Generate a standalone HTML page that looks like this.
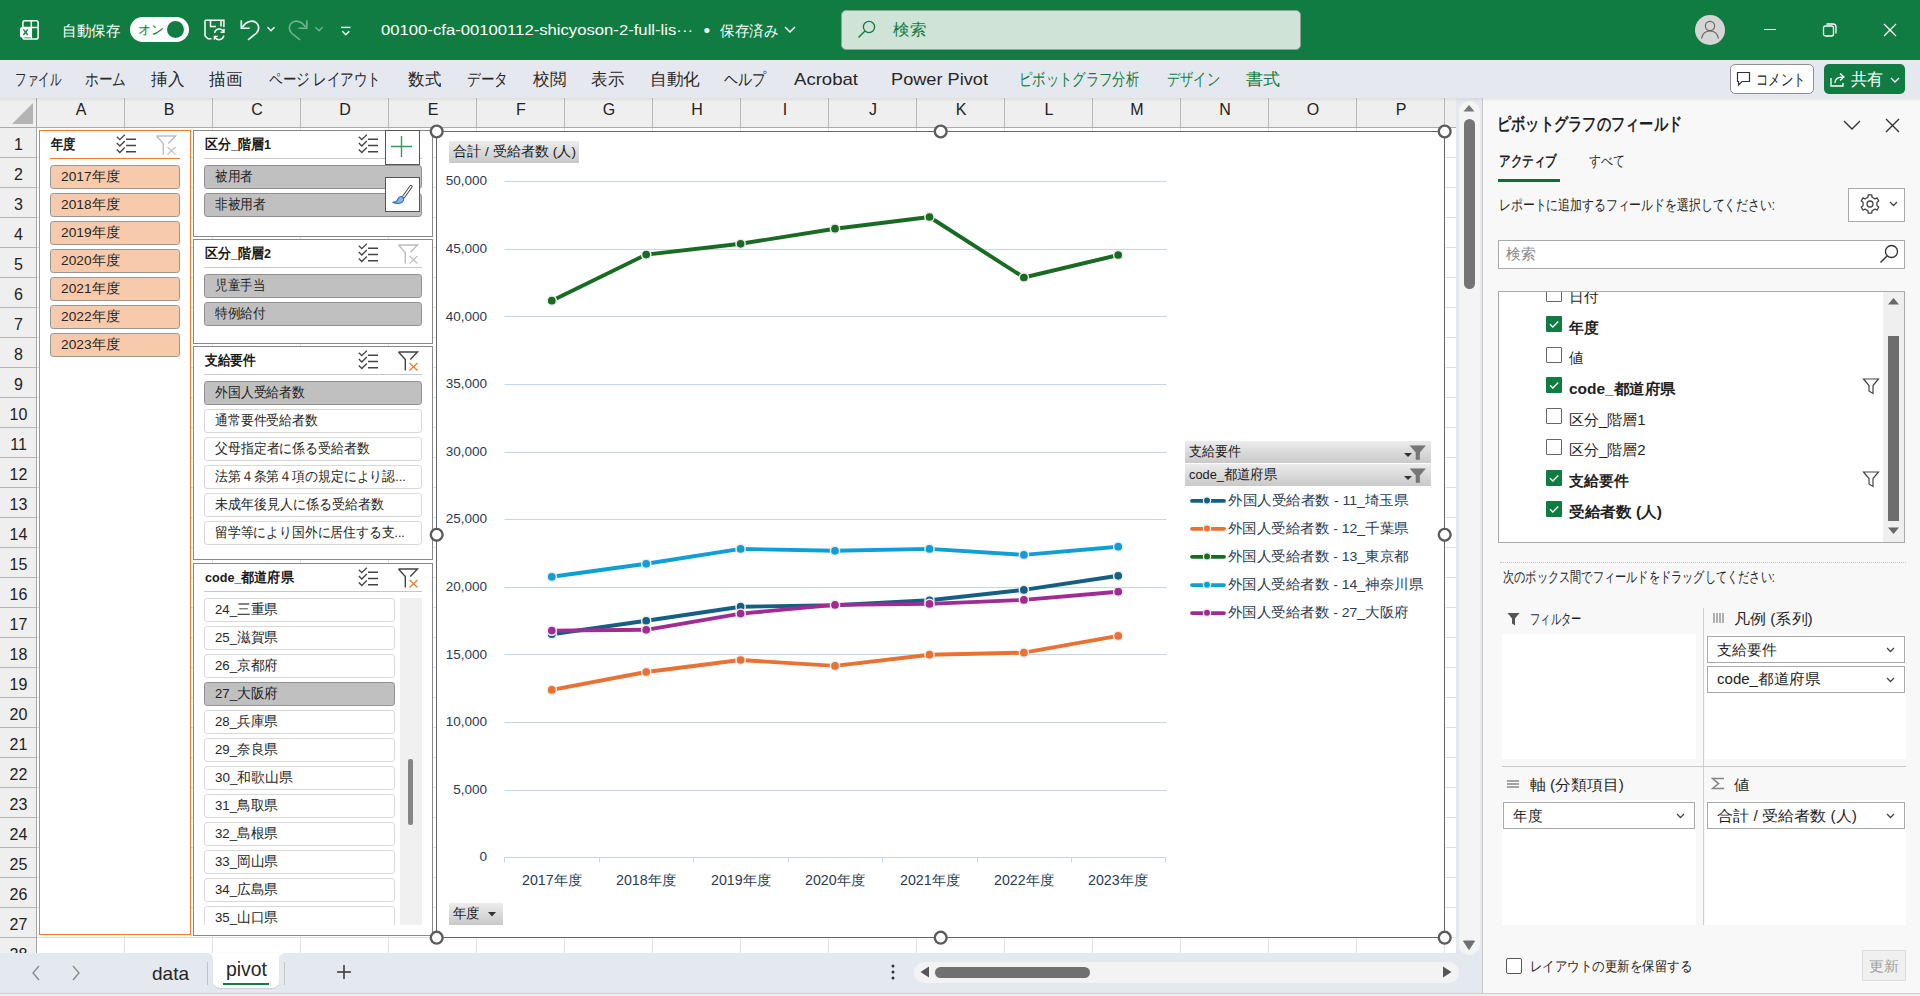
<!DOCTYPE html><html><head><meta charset="utf-8"><style>
*{box-sizing:border-box;margin:0;padding:0}
html,body{width:1920px;height:996px;overflow:hidden;background:#fff;font-family:"Liberation Sans",sans-serif;color:#222}
.a{position:absolute}
.t{position:absolute;white-space:nowrap;line-height:1}
svg{position:absolute;overflow:visible}
</style></head><body>
<div class="a" style="left:0px;top:0px;width:1920px;height:60px;background:#107c41"></div>
<svg style="left:19px;top:19px;" width="22" height="23" viewBox="0 0 22 23"><rect x="3.9" y="1.7" width="15.2" height="18.3" rx="1.8" fill="none" stroke="#fff" stroke-width="1.5"/><line x1="12.3" y1="1.7" x2="12.3" y2="20" stroke="#fff" stroke-width="1.5"/><line x1="3.9" y1="8.5" x2="19.1" y2="8.5" stroke="#fff" stroke-width="1.5"/><rect x="1" y="7.9" width="11.5" height="10.6" rx="2" fill="#fff"/><path d="M4.4 10.4l4.4 5.6M8.8 10.4l-4.4 5.6" stroke="#107c41" stroke-width="1.4"/></svg>
<div class="t" id="k0" style="left:62px;top:22.5px;font-size:15px;height:15px;color:#fff;transform:scaleX(0.9667);transform-origin:0 50%;">自動保存</div>
<div class="a" style="left:130px;top:17px;width:59px;height:25px;background:#fff;border-radius:13px"></div>
<div class="t" style="left:138px;top:23.0px;font-size:13px;height:13px;color:#107c41;">オン</div>
<div class="a" style="left:167px;top:21px;width:17px;height:17px;border-radius:50%;background:#107c41"></div>
<svg style="left:204px;top:18px;" width="24" height="24" viewBox="0 0 24 24"><path d="M1 2.2H19.9V9M1 2.2V18L4 20.8H7.5M6.5 2.2V8.5H12M17 2.2V8.5" fill="none" stroke="#fff" stroke-width="1.5"/><path d="M10.6 15a4.8 4.8 0 0 1 8.9-1.6M19.8 17.6a4.8 4.8 0 0 1-8.9 1.6" fill="none" stroke="#fff" stroke-width="1.5"/><path d="M20 10.8v3.4h-3.4M10.4 21.8v-3.4h3.4" fill="none" stroke="#fff" stroke-width="1.4"/></svg>
<svg style="left:238px;top:16px;" width="24" height="28" viewBox="0 0 24 28"><path d="M3.3 4.2V12.3H11.7" fill="none" stroke="#fff" stroke-width="1.6"/><path d="M4.5 11C8 5.5 15 3 19 7.5C22 11 20.5 14.5 18.5 17L10 23.8" fill="none" stroke="#fff" stroke-width="1.6"/></svg>
<svg style="left:266px;top:26px;" width="10" height="7" viewBox="0 0 10 7"><path d="M1.5 1.3l3.5 3.5 3.5-3.5" fill="none" stroke="#fff" stroke-width="1.4"/></svg>
<svg style="left:287px;top:16px;" width="24" height="28" viewBox="0 0 24 28"><path d="M19.8 4.2V12.3H11.4" fill="none" stroke="#72b28f" stroke-width="1.6"/><path d="M18.5 11C15 5.5 8 3 4 7.5C1 11 2.5 14.5 4.5 17L13 23.8" fill="none" stroke="#72b28f" stroke-width="1.6"/></svg>
<svg style="left:314px;top:26px;" width="10" height="7" viewBox="0 0 10 7"><path d="M1.5 1.3l3.5 3.5 3.5-3.5" fill="none" stroke="#72b28f" stroke-width="1.4"/></svg>
<svg style="left:340px;top:24px;" width="12" height="14" viewBox="0 0 12 14"><path d="M1 3.4h9.5" stroke="#fff" stroke-width="1.4"/><path d="M2.3 7.2l3.5 3.6 3.5-3.6" fill="none" stroke="#fff" stroke-width="1.4"/></svg>
<div class="t" id="k1" style="left:381px;top:22.2px;font-size:15.5px;height:15.5px;color:#fff;transform:scaleX(1.0757);transform-origin:0 50%;">00100-cfa-00100112-shicyoson-2-full-lis···</div>
<div class="t" style="left:703.5px;top:20.5px;font-size:19px;height:19px;color:#fff;">•</div>
<div class="t" id="k2" style="left:719.5px;top:22.5px;font-size:15px;height:15px;color:#fff;transform:scaleX(0.9667);transform-origin:0 50%;">保存済み</div>
<svg style="left:784px;top:26px;" width="12" height="8" viewBox="0 0 12 8"><path d="M1 1l5 5 5-5" fill="none" stroke="#fff" stroke-width="1.5"/></svg>
<div class="a" style="left:841px;top:10px;width:460px;height:40px;background:#d0e3d7;border-radius:5px;border:1px solid #8aa596"></div>
<svg style="left:856px;top:19px;" width="20" height="20" viewBox="0 0 20 20"><circle cx="13" cy="8" r="5.6" fill="none" stroke="#107c41" stroke-width="1.3"/><path d="M9 12L2.5 18.5" stroke="#107c41" stroke-width="1.4"/></svg>
<div class="t" id="k3" style="left:893px;top:21.5px;font-size:16px;height:16px;color:#107c41;transform:scaleX(1.0312);transform-origin:0 50%;">検索</div>
<div class="a" style="left:1695px;top:15px;width:30px;height:30px;border-radius:50%;background:#d5d5d5"></div>
<svg style="left:1700px;top:19px;" width="20" height="20" viewBox="0 0 20 20"><circle cx="10" cy="7" r="4.6" fill="none" stroke="#666" stroke-width="1.2"/><path d="M1.5 19.5c1-5 4-7.5 8.5-7.5s7.5 2.5 8.5 7.5" fill="none" stroke="#666" stroke-width="1.2"/></svg>
<div class="a" style="left:1764px;top:29px;width:12px;height:1.2px;background:#fff"></div>
<svg style="left:1822px;top:22px;" width="16" height="16" viewBox="0 0 16 16"><rect x="1.5" y="4" width="10" height="10" rx="2" fill="none" stroke="#fff" stroke-width="1.3"/><path d="M4.5 2h6.5a3 3 0 0 1 3 3v6.5" fill="none" stroke="#fff" stroke-width="1.3"/></svg>
<svg style="left:1883px;top:23px;" width="14" height="14" viewBox="0 0 14 14"><path d="M1 1l12 12M13 1L1 13" stroke="#fff" stroke-width="1.3"/></svg>
<div class="a" style="left:0px;top:60px;width:1920px;height:38px;background:#e5e9ef"></div>
<div class="t" id="k4" style="left:15px;top:71.0px;font-size:17px;height:17px;color:#262626;transform:scaleX(0.6765);transform-origin:0 50%;">ファイル</div>
<div class="t" id="k5" style="left:85px;top:71.0px;font-size:17px;height:17px;color:#262626;transform:scaleX(0.8039);transform-origin:0 50%;">ホーム</div>
<div class="t" id="k6" style="left:151px;top:71.0px;font-size:17px;height:17px;color:#262626;transform:scaleX(0.9706);transform-origin:0 50%;">挿入</div>
<div class="t" id="k7" style="left:209px;top:71.0px;font-size:17px;height:17px;color:#262626;transform:scaleX(0.9706);transform-origin:0 50%;">描画</div>
<div class="t" id="k8" style="left:269px;top:71.0px;font-size:17px;height:17px;color:#262626;transform:scaleX(0.7958);transform-origin:0 50%;">ページ レイアウト</div>
<div class="t" id="k9" style="left:408px;top:71.0px;font-size:17px;height:17px;color:#262626;transform:scaleX(0.9706);transform-origin:0 50%;">数式</div>
<div class="t" id="k10" style="left:467px;top:71.0px;font-size:17px;height:17px;color:#262626;transform:scaleX(0.8039);transform-origin:0 50%;">データ</div>
<div class="t" id="k11" style="left:533px;top:71.0px;font-size:17px;height:17px;color:#262626;transform:scaleX(0.9706);transform-origin:0 50%;">校閲</div>
<div class="t" id="k12" style="left:591px;top:71.0px;font-size:17px;height:17px;color:#262626;transform:scaleX(0.9706);transform-origin:0 50%;">表示</div>
<div class="t" id="k13" style="left:650px;top:71.0px;font-size:17px;height:17px;color:#262626;transform:scaleX(0.9804);transform-origin:0 50%;">自動化</div>
<div class="t" id="k14" style="left:724px;top:71.0px;font-size:17px;height:17px;color:#262626;transform:scaleX(0.8235);transform-origin:0 50%;">ヘルプ</div>
<div class="t" id="k15" style="left:794px;top:71.0px;font-size:17px;height:17px;color:#262626;transform:scaleX(1.0923);transform-origin:0 50%;">Acrobat</div>
<div class="t" id="k16" style="left:891px;top:71.0px;font-size:17px;height:17px;color:#262626;transform:scaleX(1.0694);transform-origin:0 50%;">Power Pivot</div>
<div class="t" id="k17" style="left:1019px;top:71.0px;font-size:17px;height:17px;color:#107c41;transform:scaleX(0.7843);transform-origin:0 50%;">ピボットグラフ分析</div>
<div class="t" id="k18" style="left:1167px;top:71.0px;font-size:17px;height:17px;color:#107c41;transform:scaleX(0.7794);transform-origin:0 50%;">デザイン</div>
<div class="t" id="k19" style="left:1246px;top:71.0px;font-size:17px;height:17px;color:#107c41;transform:scaleX(1.0000);transform-origin:0 50%;">書式</div>
<div class="a" style="left:1730px;top:64px;width:84px;height:30px;background:#fff;border:1px solid #8f8f8f;border-radius:5px"></div>
<svg style="left:1736px;top:71px;" width="16" height="16" viewBox="0 0 16 16"><path d="M1.5 1.5h12v9H6l-3.5 3.5v-3.5h-1z" fill="none" stroke="#333" stroke-width="1.2"/></svg>
<div class="t" id="k20" style="left:1755.5px;top:71.5px;font-size:16px;height:16px;color:#262626;transform:scaleX(0.7734);transform-origin:0 50%;">コメント</div>
<div class="a" style="left:1824px;top:64px;width:81px;height:30px;background:#107c41;border-radius:5px"></div>
<svg style="left:1829px;top:71px;" width="18" height="17" viewBox="0 0 18 17"><path d="M2 7v8h12v-3" fill="none" stroke="#fff" stroke-width="1.3"/><path d="M6 12c0-4 3-6 8-6M11 2.5l4 3.5-4 3.5" fill="none" stroke="#fff" stroke-width="1.3"/></svg>
<div class="t" id="k21" style="left:1850.5px;top:71.0px;font-size:17px;height:17px;color:#fff;transform:scaleX(0.9412);transform-origin:0 50%;">共有</div>
<svg style="left:1890px;top:77px;" width="10" height="6" viewBox="0 0 10 6"><path d="M1 1l4 4 4-4" fill="none" stroke="#fff" stroke-width="1.4"/></svg>
<div class="a" style="left:37px;top:128px;width:1419px;height:825px;background-color:#fff;background-image:linear-gradient(to right,#e1e1e1 1px,transparent 1px),linear-gradient(to bottom,#e1e1e1 1px,transparent 1px);background-size:88px 30px;background-position:87px 29px"></div>
<div class="a" style="left:0px;top:98px;width:1456px;height:30px;background:#efefef;border-bottom:1px solid #ababab"></div>
<div class="t" style="left:41.0px;top:101.5px;width:80px;text-align:center;font-size:16px;height:16px;color:#222;">A</div>
<div class="a" style="left:124px;top:98px;width:1px;height:29px;background:#b9b9b9"></div>
<div class="t" style="left:129.0px;top:101.5px;width:80px;text-align:center;font-size:16px;height:16px;color:#222;">B</div>
<div class="a" style="left:212px;top:98px;width:1px;height:29px;background:#b9b9b9"></div>
<div class="t" style="left:217.0px;top:101.5px;width:80px;text-align:center;font-size:16px;height:16px;color:#222;">C</div>
<div class="a" style="left:300px;top:98px;width:1px;height:29px;background:#b9b9b9"></div>
<div class="t" style="left:305.0px;top:101.5px;width:80px;text-align:center;font-size:16px;height:16px;color:#222;">D</div>
<div class="a" style="left:388px;top:98px;width:1px;height:29px;background:#b9b9b9"></div>
<div class="t" style="left:393.0px;top:101.5px;width:80px;text-align:center;font-size:16px;height:16px;color:#222;">E</div>
<div class="a" style="left:476px;top:98px;width:1px;height:29px;background:#b9b9b9"></div>
<div class="t" style="left:481.0px;top:101.5px;width:80px;text-align:center;font-size:16px;height:16px;color:#222;">F</div>
<div class="a" style="left:564px;top:98px;width:1px;height:29px;background:#b9b9b9"></div>
<div class="t" style="left:569.0px;top:101.5px;width:80px;text-align:center;font-size:16px;height:16px;color:#222;">G</div>
<div class="a" style="left:652px;top:98px;width:1px;height:29px;background:#b9b9b9"></div>
<div class="t" style="left:657.0px;top:101.5px;width:80px;text-align:center;font-size:16px;height:16px;color:#222;">H</div>
<div class="a" style="left:740px;top:98px;width:1px;height:29px;background:#b9b9b9"></div>
<div class="t" style="left:745.0px;top:101.5px;width:80px;text-align:center;font-size:16px;height:16px;color:#222;">I</div>
<div class="a" style="left:828px;top:98px;width:1px;height:29px;background:#b9b9b9"></div>
<div class="t" style="left:833.0px;top:101.5px;width:80px;text-align:center;font-size:16px;height:16px;color:#222;">J</div>
<div class="a" style="left:916px;top:98px;width:1px;height:29px;background:#b9b9b9"></div>
<div class="t" style="left:921.0px;top:101.5px;width:80px;text-align:center;font-size:16px;height:16px;color:#222;">K</div>
<div class="a" style="left:1004px;top:98px;width:1px;height:29px;background:#b9b9b9"></div>
<div class="t" style="left:1009.0px;top:101.5px;width:80px;text-align:center;font-size:16px;height:16px;color:#222;">L</div>
<div class="a" style="left:1092px;top:98px;width:1px;height:29px;background:#b9b9b9"></div>
<div class="t" style="left:1097.0px;top:101.5px;width:80px;text-align:center;font-size:16px;height:16px;color:#222;">M</div>
<div class="a" style="left:1180px;top:98px;width:1px;height:29px;background:#b9b9b9"></div>
<div class="t" style="left:1185.0px;top:101.5px;width:80px;text-align:center;font-size:16px;height:16px;color:#222;">N</div>
<div class="a" style="left:1268px;top:98px;width:1px;height:29px;background:#b9b9b9"></div>
<div class="t" style="left:1273.0px;top:101.5px;width:80px;text-align:center;font-size:16px;height:16px;color:#222;">O</div>
<div class="a" style="left:1356px;top:98px;width:1px;height:29px;background:#b9b9b9"></div>
<div class="t" style="left:1361.0px;top:101.5px;width:80px;text-align:center;font-size:16px;height:16px;color:#222;">P</div>
<div class="a" style="left:1444px;top:98px;width:1px;height:29px;background:#b9b9b9"></div>
<div class="a" style="left:36px;top:98px;width:1px;height:30px;background:#ababab"></div>
<svg style="left:11px;top:102px;" width="23" height="23" viewBox="0 0 23 23"><path d="M22 1v21H1z" fill="#b4b4b4"/></svg>
<div class="a" style="left:0px;top:128px;width:37px;height:825px;background:#efefef;border-right:1px solid #a6a6a6"></div>
<div class="t" style="left:0.5px;top:136.5px;width:36px;text-align:center;font-size:16px;height:16px;color:#222;">1</div>
<div class="a" style="left:0px;top:157px;width:36px;height:1px;background:#b4b4b4"></div>
<div class="t" style="left:0.5px;top:166.5px;width:36px;text-align:center;font-size:16px;height:16px;color:#222;">2</div>
<div class="a" style="left:0px;top:187px;width:36px;height:1px;background:#b4b4b4"></div>
<div class="t" style="left:0.5px;top:196.5px;width:36px;text-align:center;font-size:16px;height:16px;color:#222;">3</div>
<div class="a" style="left:0px;top:217px;width:36px;height:1px;background:#b4b4b4"></div>
<div class="t" style="left:0.5px;top:226.5px;width:36px;text-align:center;font-size:16px;height:16px;color:#222;">4</div>
<div class="a" style="left:0px;top:247px;width:36px;height:1px;background:#b4b4b4"></div>
<div class="t" style="left:0.5px;top:256.5px;width:36px;text-align:center;font-size:16px;height:16px;color:#222;">5</div>
<div class="a" style="left:0px;top:277px;width:36px;height:1px;background:#b4b4b4"></div>
<div class="t" style="left:0.5px;top:286.5px;width:36px;text-align:center;font-size:16px;height:16px;color:#222;">6</div>
<div class="a" style="left:0px;top:307px;width:36px;height:1px;background:#b4b4b4"></div>
<div class="t" style="left:0.5px;top:316.5px;width:36px;text-align:center;font-size:16px;height:16px;color:#222;">7</div>
<div class="a" style="left:0px;top:337px;width:36px;height:1px;background:#b4b4b4"></div>
<div class="t" style="left:0.5px;top:346.5px;width:36px;text-align:center;font-size:16px;height:16px;color:#222;">8</div>
<div class="a" style="left:0px;top:367px;width:36px;height:1px;background:#b4b4b4"></div>
<div class="t" style="left:0.5px;top:376.5px;width:36px;text-align:center;font-size:16px;height:16px;color:#222;">9</div>
<div class="a" style="left:0px;top:397px;width:36px;height:1px;background:#b4b4b4"></div>
<div class="t" style="left:0.5px;top:406.5px;width:36px;text-align:center;font-size:16px;height:16px;color:#222;">10</div>
<div class="a" style="left:0px;top:427px;width:36px;height:1px;background:#b4b4b4"></div>
<div class="t" style="left:0.5px;top:436.5px;width:36px;text-align:center;font-size:16px;height:16px;color:#222;">11</div>
<div class="a" style="left:0px;top:457px;width:36px;height:1px;background:#b4b4b4"></div>
<div class="t" style="left:0.5px;top:466.5px;width:36px;text-align:center;font-size:16px;height:16px;color:#222;">12</div>
<div class="a" style="left:0px;top:487px;width:36px;height:1px;background:#b4b4b4"></div>
<div class="t" style="left:0.5px;top:496.5px;width:36px;text-align:center;font-size:16px;height:16px;color:#222;">13</div>
<div class="a" style="left:0px;top:517px;width:36px;height:1px;background:#b4b4b4"></div>
<div class="t" style="left:0.5px;top:526.5px;width:36px;text-align:center;font-size:16px;height:16px;color:#222;">14</div>
<div class="a" style="left:0px;top:547px;width:36px;height:1px;background:#b4b4b4"></div>
<div class="t" style="left:0.5px;top:556.5px;width:36px;text-align:center;font-size:16px;height:16px;color:#222;">15</div>
<div class="a" style="left:0px;top:577px;width:36px;height:1px;background:#b4b4b4"></div>
<div class="t" style="left:0.5px;top:586.5px;width:36px;text-align:center;font-size:16px;height:16px;color:#222;">16</div>
<div class="a" style="left:0px;top:607px;width:36px;height:1px;background:#b4b4b4"></div>
<div class="t" style="left:0.5px;top:616.5px;width:36px;text-align:center;font-size:16px;height:16px;color:#222;">17</div>
<div class="a" style="left:0px;top:637px;width:36px;height:1px;background:#b4b4b4"></div>
<div class="t" style="left:0.5px;top:646.5px;width:36px;text-align:center;font-size:16px;height:16px;color:#222;">18</div>
<div class="a" style="left:0px;top:667px;width:36px;height:1px;background:#b4b4b4"></div>
<div class="t" style="left:0.5px;top:676.5px;width:36px;text-align:center;font-size:16px;height:16px;color:#222;">19</div>
<div class="a" style="left:0px;top:697px;width:36px;height:1px;background:#b4b4b4"></div>
<div class="t" style="left:0.5px;top:706.5px;width:36px;text-align:center;font-size:16px;height:16px;color:#222;">20</div>
<div class="a" style="left:0px;top:727px;width:36px;height:1px;background:#b4b4b4"></div>
<div class="t" style="left:0.5px;top:736.5px;width:36px;text-align:center;font-size:16px;height:16px;color:#222;">21</div>
<div class="a" style="left:0px;top:757px;width:36px;height:1px;background:#b4b4b4"></div>
<div class="t" style="left:0.5px;top:766.5px;width:36px;text-align:center;font-size:16px;height:16px;color:#222;">22</div>
<div class="a" style="left:0px;top:787px;width:36px;height:1px;background:#b4b4b4"></div>
<div class="t" style="left:0.5px;top:796.5px;width:36px;text-align:center;font-size:16px;height:16px;color:#222;">23</div>
<div class="a" style="left:0px;top:817px;width:36px;height:1px;background:#b4b4b4"></div>
<div class="t" style="left:0.5px;top:826.5px;width:36px;text-align:center;font-size:16px;height:16px;color:#222;">24</div>
<div class="a" style="left:0px;top:847px;width:36px;height:1px;background:#b4b4b4"></div>
<div class="t" style="left:0.5px;top:856.5px;width:36px;text-align:center;font-size:16px;height:16px;color:#222;">25</div>
<div class="a" style="left:0px;top:877px;width:36px;height:1px;background:#b4b4b4"></div>
<div class="t" style="left:0.5px;top:886.5px;width:36px;text-align:center;font-size:16px;height:16px;color:#222;">26</div>
<div class="a" style="left:0px;top:907px;width:36px;height:1px;background:#b4b4b4"></div>
<div class="t" style="left:0.5px;top:916.5px;width:36px;text-align:center;font-size:16px;height:16px;color:#222;">27</div>
<div class="a" style="left:0px;top:937px;width:36px;height:1px;background:#b4b4b4"></div>
<div class="t" style="left:0.5px;top:946.5px;width:36px;text-align:center;font-size:16px;height:16px;color:#222;">28</div>
<div class="a" style="left:0px;top:967px;width:36px;height:1px;background:#b4b4b4"></div>
<div class="a" style="left:39px;top:130px;width:152px;height:805.3px;background:#fff;border:1.3px solid #ed7d31"></div>
<div class="t" id="k22" style="left:50.5px;top:137.8px;font-size:13.5px;height:13.5px;color:#1a1a1a;font-weight:bold;transform:scaleX(0.8750);transform-origin:0 50%;">年度</div>
<div class="a" style="left:50px;top:158px;width:130px;height:1.2px;background:#ed7d31"></div>
<svg style="left:116px;top:135px;" width="21" height="20" viewBox="0 0 21 20"><path d="M0.8 1.7l3 3 5-5M0.8 8l3 3 5-5M0.8 14.5l3 3 5-5" fill="none" stroke="#444" stroke-width="1.3"/><path d="M10 4.2h10M10 10.4h10M10 16.8h10" stroke="#444" stroke-width="1.5"/></svg>
<svg style="left:156px;top:134.5px;" width="21" height="21" viewBox="0 0 21 21"><path d="M0.5 1H19.5L12.3 8.6M0.5 1L7.3 8.6V19.5" fill="none" stroke="#bdbdbd" stroke-width="1.4"/><path d="M11.5 12l8 7.5M19.5 12l-8 7.5" stroke="#c4c4c4" stroke-width="1.3"/></svg>
<div class="a" style="left:39px;top:130px;width:152px;height:805.3px;overflow:hidden"><div class="a" style="left:11px;top:35.3px;width:130px;height:23.5px;border-radius:3.2px;background:#f8caac;border:1px solid #979797"></div><div class="t" id="k23" style="left:22px;top:40.3px;font-size:13.5px;color:#262626;transform:scaleX(1.0164);transform-origin:0 50%;">2017年度</div><div class="a" style="left:11px;top:63.3px;width:130px;height:23.5px;border-radius:3.2px;background:#f8caac;border:1px solid #979797"></div><div class="t" id="k24" style="left:22px;top:68.3px;font-size:13.5px;color:#262626;transform:scaleX(1.0164);transform-origin:0 50%;">2018年度</div><div class="a" style="left:11px;top:91.3px;width:130px;height:23.5px;border-radius:3.2px;background:#f8caac;border:1px solid #979797"></div><div class="t" id="k25" style="left:22px;top:96.3px;font-size:13.5px;color:#262626;transform:scaleX(1.0164);transform-origin:0 50%;">2019年度</div><div class="a" style="left:11px;top:119.3px;width:130px;height:23.5px;border-radius:3.2px;background:#f8caac;border:1px solid #979797"></div><div class="t" id="k26" style="left:22px;top:124.3px;font-size:13.5px;color:#262626;transform:scaleX(1.0164);transform-origin:0 50%;">2020年度</div><div class="a" style="left:11px;top:147.3px;width:130px;height:23.5px;border-radius:3.2px;background:#f8caac;border:1px solid #979797"></div><div class="t" id="k27" style="left:22px;top:152.3px;font-size:13.5px;color:#262626;transform:scaleX(1.0164);transform-origin:0 50%;">2021年度</div><div class="a" style="left:11px;top:175.3px;width:130px;height:23.5px;border-radius:3.2px;background:#f8caac;border:1px solid #979797"></div><div class="t" id="k28" style="left:22px;top:180.3px;font-size:13.5px;color:#262626;transform:scaleX(1.0164);transform-origin:0 50%;">2022年度</div><div class="a" style="left:11px;top:203.3px;width:130px;height:23.5px;border-radius:3.2px;background:#f8caac;border:1px solid #979797"></div><div class="t" id="k29" style="left:22px;top:208.3px;font-size:13.5px;color:#262626;transform:scaleX(1.0164);transform-origin:0 50%;">2023年度</div></div>
<div class="a" style="left:193px;top:130px;width:240px;height:107px;background:#fff;border:1px solid #888888"></div>
<div class="t" id="k30" style="left:204.5px;top:137.8px;font-size:13.5px;height:13.5px;color:#1a1a1a;font-weight:bold;transform:scaleX(0.9292);transform-origin:0 50%;">区分_階層1</div>
<div class="a" style="left:204px;top:158px;width:218px;height:1.2px;background:#c8c8c8"></div>
<svg style="left:358px;top:135px;" width="21" height="20" viewBox="0 0 21 20"><path d="M0.8 1.7l3 3 5-5M0.8 8l3 3 5-5M0.8 14.5l3 3 5-5" fill="none" stroke="#444" stroke-width="1.3"/><path d="M10 4.2h10M10 10.4h10M10 16.8h10" stroke="#444" stroke-width="1.5"/></svg>
<svg style="left:398px;top:134.5px;" width="21" height="21" viewBox="0 0 21 21"><path d="M0.5 1H19.5L12.3 8.6M0.5 1L7.3 8.6V19.5" fill="none" stroke="#bdbdbd" stroke-width="1.4"/><path d="M11.5 12l8 7.5M19.5 12l-8 7.5" stroke="#c4c4c4" stroke-width="1.3"/></svg>
<div class="a" style="left:193px;top:130px;width:240px;height:107px;overflow:hidden"><div class="a" style="left:11px;top:35.3px;width:218px;height:23.5px;border-radius:3.2px;background:#c0c0c0;border:1px solid #919191"></div><div class="t" id="k31" style="left:22px;top:40.3px;font-size:13.5px;color:#222;transform:scaleX(0.9048);transform-origin:0 50%;">被用者</div><div class="a" style="left:11px;top:63.3px;width:218px;height:23.5px;border-radius:3.2px;background:#c0c0c0;border:1px solid #919191"></div><div class="t" id="k32" style="left:22px;top:68.3px;font-size:13.5px;color:#222;transform:scaleX(0.9107);transform-origin:0 50%;">非被用者</div></div>
<div class="a" style="left:193px;top:239px;width:240px;height:105px;background:#fff;border:1px solid #888888"></div>
<div class="t" id="k33" style="left:204.5px;top:246.8px;font-size:13.5px;height:13.5px;color:#1a1a1a;font-weight:bold;transform:scaleX(0.9292);transform-origin:0 50%;">区分_階層2</div>
<div class="a" style="left:204px;top:267px;width:218px;height:1.2px;background:#c8c8c8"></div>
<svg style="left:358px;top:244px;" width="21" height="20" viewBox="0 0 21 20"><path d="M0.8 1.7l3 3 5-5M0.8 8l3 3 5-5M0.8 14.5l3 3 5-5" fill="none" stroke="#444" stroke-width="1.3"/><path d="M10 4.2h10M10 10.4h10M10 16.8h10" stroke="#444" stroke-width="1.5"/></svg>
<svg style="left:398px;top:243.5px;" width="21" height="21" viewBox="0 0 21 21"><path d="M0.5 1H19.5L12.3 8.6M0.5 1L7.3 8.6V19.5" fill="none" stroke="#bdbdbd" stroke-width="1.4"/><path d="M11.5 12l8 7.5M19.5 12l-8 7.5" stroke="#c4c4c4" stroke-width="1.3"/></svg>
<div class="a" style="left:193px;top:239px;width:240px;height:105px;overflow:hidden"><div class="a" style="left:11px;top:35.3px;width:218px;height:23.5px;border-radius:3.2px;background:#c0c0c0;border:1px solid #919191"></div><div class="t" id="k34" style="left:22px;top:40.3px;font-size:13.5px;color:#222;transform:scaleX(0.8929);transform-origin:0 50%;">児童手当</div><div class="a" style="left:11px;top:63.3px;width:218px;height:23.5px;border-radius:3.2px;background:#c0c0c0;border:1px solid #919191"></div><div class="t" id="k35" style="left:22px;top:68.3px;font-size:13.5px;color:#222;transform:scaleX(0.9018);transform-origin:0 50%;">特例給付</div></div>
<div class="a" style="left:193px;top:346px;width:240px;height:214px;background:#fff;border:1px solid #888888"></div>
<div class="t" id="k36" style="left:204.5px;top:353.8px;font-size:13.5px;height:13.5px;color:#1a1a1a;font-weight:bold;transform:scaleX(0.9107);transform-origin:0 50%;">支給要件</div>
<div class="a" style="left:204px;top:374px;width:218px;height:1.2px;background:#c8c8c8"></div>
<svg style="left:358px;top:351px;" width="21" height="20" viewBox="0 0 21 20"><path d="M0.8 1.7l3 3 5-5M0.8 8l3 3 5-5M0.8 14.5l3 3 5-5" fill="none" stroke="#444" stroke-width="1.3"/><path d="M10 4.2h10M10 10.4h10M10 16.8h10" stroke="#444" stroke-width="1.5"/></svg>
<svg style="left:398px;top:350.5px;" width="21" height="21" viewBox="0 0 21 21"><path d="M0.5 1H19.5L12.3 8.6M0.5 1L7.3 8.6V19.5" fill="none" stroke="#444" stroke-width="1.4"/><path d="M11.5 12l8 7.5M19.5 12l-8 7.5" stroke="#ed7d31" stroke-width="1.3"/></svg>
<div class="a" style="left:193px;top:346px;width:240px;height:214px;overflow:hidden"><div class="a" style="left:11px;top:35.3px;width:218px;height:23.5px;border-radius:3.2px;background:#c0c0c0;border:1px solid #919191"></div><div class="t" id="k37" style="left:22px;top:40.3px;font-size:13.5px;color:#222;transform:scaleX(0.9184);transform-origin:0 50%;">外国人受給者数</div><div class="a" style="left:11px;top:63.3px;width:218px;height:23.5px;border-radius:3.2px;background:#fff;border:1px solid #d8d8d8"></div><div class="t" id="k38" style="left:22px;top:68.3px;font-size:13.5px;color:#262626;transform:scaleX(0.9196);transform-origin:0 50%;">通常要件受給者数</div><div class="a" style="left:11px;top:91.3px;width:218px;height:23.5px;border-radius:3.2px;background:#fff;border:1px solid #d8d8d8"></div><div class="t" id="k39" style="left:22px;top:96.3px;font-size:13.5px;color:#262626;transform:scaleX(0.9202);transform-origin:0 50%;">父母指定者に係る受給者数</div><div class="a" style="left:11px;top:119.3px;width:218px;height:23.5px;border-radius:3.2px;background:#fff;border:1px solid #d8d8d8"></div><div class="t" id="k40" style="left:22px;top:124.3px;font-size:13.5px;color:#262626;transform:scaleX(0.9196);transform-origin:0 50%;">法第４条第４項の規定により認...</div><div class="a" style="left:11px;top:147.3px;width:218px;height:23.5px;border-radius:3.2px;background:#fff;border:1px solid #d8d8d8"></div><div class="t" id="k41" style="left:22px;top:152.3px;font-size:13.5px;color:#262626;transform:scaleX(0.9269);transform-origin:0 50%;">未成年後見人に係る受給者数</div><div class="a" style="left:11px;top:175.3px;width:218px;height:23.5px;border-radius:3.2px;background:#fff;border:1px solid #d8d8d8"></div><div class="t" id="k42" style="left:22px;top:180.3px;font-size:13.5px;color:#262626;transform:scaleX(0.9157);transform-origin:0 50%;">留学等により国外に居住する支...</div></div>
<div class="a" style="left:193px;top:563px;width:240px;height:373px;background:#fff;border:1px solid #888888"></div>
<div class="t" id="k43" style="left:204.5px;top:570.8px;font-size:13.5px;height:13.5px;color:#1a1a1a;font-weight:bold;transform:scaleX(0.9323);transform-origin:0 50%;">code_都道府県</div>
<div class="a" style="left:204px;top:591px;width:218px;height:1.2px;background:#c8c8c8"></div>
<svg style="left:358px;top:568px;" width="21" height="20" viewBox="0 0 21 20"><path d="M0.8 1.7l3 3 5-5M0.8 8l3 3 5-5M0.8 14.5l3 3 5-5" fill="none" stroke="#444" stroke-width="1.3"/><path d="M10 4.2h10M10 10.4h10M10 16.8h10" stroke="#444" stroke-width="1.5"/></svg>
<svg style="left:398px;top:567.5px;" width="21" height="21" viewBox="0 0 21 21"><path d="M0.5 1H19.5L12.3 8.6M0.5 1L7.3 8.6V19.5" fill="none" stroke="#444" stroke-width="1.4"/><path d="M11.5 12l8 7.5M19.5 12l-8 7.5" stroke="#ed7d31" stroke-width="1.3"/></svg>
<div class="a" style="left:193px;top:563px;width:240px;height:362px;overflow:hidden"><div class="a" style="left:11px;top:35.3px;width:190.5px;height:23.5px;border-radius:3.2px;background:#fff;border:1px solid #d8d8d8"></div><div class="t" id="k44" style="left:22px;top:40.3px;font-size:13.5px;color:#262626;transform:scaleX(0.9763);transform-origin:0 50%;">24_三重県</div><div class="a" style="left:11px;top:63.3px;width:190.5px;height:23.5px;border-radius:3.2px;background:#fff;border:1px solid #d8d8d8"></div><div class="t" id="k45" style="left:22px;top:68.3px;font-size:13.5px;color:#262626;transform:scaleX(0.9763);transform-origin:0 50%;">25_滋賀県</div><div class="a" style="left:11px;top:91.3px;width:190.5px;height:23.5px;border-radius:3.2px;background:#fff;border:1px solid #d8d8d8"></div><div class="t" id="k46" style="left:22px;top:96.3px;font-size:13.5px;color:#262626;transform:scaleX(0.9763);transform-origin:0 50%;">26_京都府</div><div class="a" style="left:11px;top:119.3px;width:190.5px;height:23.5px;border-radius:3.2px;background:#c0c0c0;border:1px solid #919191"></div><div class="t" id="k47" style="left:22px;top:124.3px;font-size:13.5px;color:#222;transform:scaleX(0.9763);transform-origin:0 50%;">27_大阪府</div><div class="a" style="left:11px;top:147.3px;width:190.5px;height:23.5px;border-radius:3.2px;background:#fff;border:1px solid #d8d8d8"></div><div class="t" id="k48" style="left:22px;top:152.3px;font-size:13.5px;color:#262626;transform:scaleX(0.9763);transform-origin:0 50%;">28_兵庫県</div><div class="a" style="left:11px;top:175.3px;width:190.5px;height:23.5px;border-radius:3.2px;background:#fff;border:1px solid #d8d8d8"></div><div class="t" id="k49" style="left:22px;top:180.3px;font-size:13.5px;color:#262626;transform:scaleX(0.9763);transform-origin:0 50%;">29_奈良県</div><div class="a" style="left:11px;top:203.3px;width:190.5px;height:23.5px;border-radius:3.2px;background:#fff;border:1px solid #d8d8d8"></div><div class="t" id="k50" style="left:22px;top:208.3px;font-size:13.5px;color:#262626;transform:scaleX(0.9932);transform-origin:0 50%;">30_和歌山県</div><div class="a" style="left:11px;top:231.3px;width:190.5px;height:23.5px;border-radius:3.2px;background:#fff;border:1px solid #d8d8d8"></div><div class="t" id="k51" style="left:22px;top:236.3px;font-size:13.5px;color:#262626;transform:scaleX(0.9763);transform-origin:0 50%;">31_鳥取県</div><div class="a" style="left:11px;top:259.3px;width:190.5px;height:23.5px;border-radius:3.2px;background:#fff;border:1px solid #d8d8d8"></div><div class="t" id="k52" style="left:22px;top:264.3px;font-size:13.5px;color:#262626;transform:scaleX(0.9763);transform-origin:0 50%;">32_島根県</div><div class="a" style="left:11px;top:287.3px;width:190.5px;height:23.5px;border-radius:3.2px;background:#fff;border:1px solid #d8d8d8"></div><div class="t" id="k53" style="left:22px;top:292.3px;font-size:13.5px;color:#262626;transform:scaleX(0.9763);transform-origin:0 50%;">33_岡山県</div><div class="a" style="left:11px;top:315.3px;width:190.5px;height:23.5px;border-radius:3.2px;background:#fff;border:1px solid #d8d8d8"></div><div class="t" id="k54" style="left:22px;top:320.3px;font-size:13.5px;color:#262626;transform:scaleX(0.9763);transform-origin:0 50%;">34_広島県</div><div class="a" style="left:11px;top:343.3px;width:190.5px;height:23.5px;border-radius:3.2px;background:#fff;border:1px solid #d8d8d8"></div><div class="t" id="k55" style="left:22px;top:348.3px;font-size:13.5px;color:#262626;transform:scaleX(0.9763);transform-origin:0 50%;">35_山口県</div></div>
<div class="a" style="left:400px;top:598px;width:22px;height:327px;background:#f0f0f0"></div>
<div class="a" style="left:408px;top:759px;width:4.5px;height:66px;background:#858585;border-radius:2px"></div>
<div class="a" style="left:385px;top:130px;width:35px;height:35px;background:#fff;border:1.3px solid #555"></div>
<svg style="left:385px;top:130px;" width="35" height="35" viewBox="0 0 35 35"><path d="M16.5 6v21M6 16.5h21" stroke="#2f9e5b" stroke-width="1.4"/></svg>
<div class="a" style="left:385px;top:177px;width:35px;height:35px;background:#fff;border:1.3px solid #555"></div>
<svg style="left:385.5px;top:177.5px;" width="33" height="33" viewBox="0 0 33 33"><path d="M25 8.5L17.5 19" stroke="#444" stroke-width="3.2" stroke-linecap="round"/><path d="M25 8.5L17.5 19" stroke="#fff" stroke-width="1.3" stroke-linecap="round"/><path d="M16 18.5c-2.5 0-4 1.5-4.5 3.5-.5 1.5-2 2.2-5 2.3 3 1.5 8 1.7 10-.5 1.2-1.3 1.4-3 .7-4.5z" fill="#8ab4e8" stroke="#2a6fc9" stroke-width="1.1"/></svg>
<div class="a" style="left:436px;top:131px;width:1009px;height:807px;background:#fff;border:1.5px solid #666"></div>
<svg style="left:0px;top:0px;pointer-events:none" width="1920" height="996" viewBox="0 0 1920 996"><path d="M504.5 857.5H1166.5" stroke="#c5d5ea" stroke-width="1"/><path d="M504.5 790.5H1166.5" stroke="#c5d5ea" stroke-width="1"/><path d="M504.5 722.5H1166.5" stroke="#c5d5ea" stroke-width="1"/><path d="M504.5 654.5H1166.5" stroke="#c5d5ea" stroke-width="1"/><path d="M504.5 587.5H1166.5" stroke="#c5d5ea" stroke-width="1"/><path d="M504.5 519.5H1166.5" stroke="#c5d5ea" stroke-width="1"/><path d="M504.5 452.5H1166.5" stroke="#c5d5ea" stroke-width="1"/><path d="M504.5 384.5H1166.5" stroke="#c5d5ea" stroke-width="1"/><path d="M504.5 316.5H1166.5" stroke="#c5d5ea" stroke-width="1"/><path d="M504.5 249.5H1166.5" stroke="#c5d5ea" stroke-width="1"/><path d="M504.5 181.5H1166.5" stroke="#c5d5ea" stroke-width="1"/><path d="M504.5 857.5V862.5" stroke="#c5d5ea" stroke-width="1"/><path d="M599.5 857.5V862.5" stroke="#c5d5ea" stroke-width="1"/><path d="M693.5 857.5V862.5" stroke="#c5d5ea" stroke-width="1"/><path d="M788.5 857.5V862.5" stroke="#c5d5ea" stroke-width="1"/><path d="M882.5 857.5V862.5" stroke="#c5d5ea" stroke-width="1"/><path d="M977.5 857.5V862.5" stroke="#c5d5ea" stroke-width="1"/><path d="M1071.5 857.5V862.5" stroke="#c5d5ea" stroke-width="1"/><path d="M1165.5 857.5V862.5" stroke="#c5d5ea" stroke-width="1"/><path d="M551.8 634.2 L646.2 620.8 L740.6 606.7 L835.0 605.2 L929.5 600.3 L1023.9 589.9 L1118.2 575.8" fill="none" stroke="#156082" stroke-width="3.9" stroke-linejoin="round"/><circle cx="551.8" cy="634.2" r="4.6" fill="#156082" stroke="#ebebeb" stroke-width="1.5"/><circle cx="646.2" cy="620.8" r="4.6" fill="#156082" stroke="#ebebeb" stroke-width="1.5"/><circle cx="740.6" cy="606.7" r="4.6" fill="#156082" stroke="#ebebeb" stroke-width="1.5"/><circle cx="835.0" cy="605.2" r="4.6" fill="#156082" stroke="#ebebeb" stroke-width="1.5"/><circle cx="929.5" cy="600.3" r="4.6" fill="#156082" stroke="#ebebeb" stroke-width="1.5"/><circle cx="1023.9" cy="589.9" r="4.6" fill="#156082" stroke="#ebebeb" stroke-width="1.5"/><circle cx="1118.2" cy="575.8" r="4.6" fill="#156082" stroke="#ebebeb" stroke-width="1.5"/><path d="M551.8 689.9 L646.2 672.0 L740.6 660.0 L835.0 665.9 L929.5 654.7 L1023.9 652.7 L1118.2 635.9" fill="none" stroke="#e97132" stroke-width="3.9" stroke-linejoin="round"/><circle cx="551.8" cy="689.9" r="4.6" fill="#e97132" stroke="#ebebeb" stroke-width="1.5"/><circle cx="646.2" cy="672.0" r="4.6" fill="#e97132" stroke="#ebebeb" stroke-width="1.5"/><circle cx="740.6" cy="660.0" r="4.6" fill="#e97132" stroke="#ebebeb" stroke-width="1.5"/><circle cx="835.0" cy="665.9" r="4.6" fill="#e97132" stroke="#ebebeb" stroke-width="1.5"/><circle cx="929.5" cy="654.7" r="4.6" fill="#e97132" stroke="#ebebeb" stroke-width="1.5"/><circle cx="1023.9" cy="652.7" r="4.6" fill="#e97132" stroke="#ebebeb" stroke-width="1.5"/><circle cx="1118.2" cy="635.9" r="4.6" fill="#e97132" stroke="#ebebeb" stroke-width="1.5"/><path d="M551.8 300.7 L646.2 254.6 L740.6 243.8 L835.0 228.7 L929.5 217.0 L1023.9 277.5 L1118.2 255.0" fill="none" stroke="#196b24" stroke-width="3.9" stroke-linejoin="round"/><circle cx="551.8" cy="300.7" r="4.6" fill="#196b24" stroke="#ebebeb" stroke-width="1.5"/><circle cx="646.2" cy="254.6" r="4.6" fill="#196b24" stroke="#ebebeb" stroke-width="1.5"/><circle cx="740.6" cy="243.8" r="4.6" fill="#196b24" stroke="#ebebeb" stroke-width="1.5"/><circle cx="835.0" cy="228.7" r="4.6" fill="#196b24" stroke="#ebebeb" stroke-width="1.5"/><circle cx="929.5" cy="217.0" r="4.6" fill="#196b24" stroke="#ebebeb" stroke-width="1.5"/><circle cx="1023.9" cy="277.5" r="4.6" fill="#196b24" stroke="#ebebeb" stroke-width="1.5"/><circle cx="1118.2" cy="255.0" r="4.6" fill="#196b24" stroke="#ebebeb" stroke-width="1.5"/><path d="M551.8 576.8 L646.2 563.8 L740.6 548.9 L835.0 550.8 L929.5 548.9 L1023.9 554.9 L1118.2 546.7" fill="none" stroke="#0f9ed5" stroke-width="3.9" stroke-linejoin="round"/><circle cx="551.8" cy="576.8" r="4.6" fill="#0f9ed5" stroke="#ebebeb" stroke-width="1.5"/><circle cx="646.2" cy="563.8" r="4.6" fill="#0f9ed5" stroke="#ebebeb" stroke-width="1.5"/><circle cx="740.6" cy="548.9" r="4.6" fill="#0f9ed5" stroke="#ebebeb" stroke-width="1.5"/><circle cx="835.0" cy="550.8" r="4.6" fill="#0f9ed5" stroke="#ebebeb" stroke-width="1.5"/><circle cx="929.5" cy="548.9" r="4.6" fill="#0f9ed5" stroke="#ebebeb" stroke-width="1.5"/><circle cx="1023.9" cy="554.9" r="4.6" fill="#0f9ed5" stroke="#ebebeb" stroke-width="1.5"/><circle cx="1118.2" cy="546.7" r="4.6" fill="#0f9ed5" stroke="#ebebeb" stroke-width="1.5"/><path d="M551.8 630.6 L646.2 629.8 L740.6 613.6 L835.0 604.9 L929.5 603.9 L1023.9 599.9 L1118.2 591.7" fill="none" stroke="#a02b93" stroke-width="3.9" stroke-linejoin="round"/><circle cx="551.8" cy="630.6" r="4.6" fill="#a02b93" stroke="#ebebeb" stroke-width="1.5"/><circle cx="646.2" cy="629.8" r="4.6" fill="#a02b93" stroke="#ebebeb" stroke-width="1.5"/><circle cx="740.6" cy="613.6" r="4.6" fill="#a02b93" stroke="#ebebeb" stroke-width="1.5"/><circle cx="835.0" cy="604.9" r="4.6" fill="#a02b93" stroke="#ebebeb" stroke-width="1.5"/><circle cx="929.5" cy="603.9" r="4.6" fill="#a02b93" stroke="#ebebeb" stroke-width="1.5"/><circle cx="1023.9" cy="599.9" r="4.6" fill="#a02b93" stroke="#ebebeb" stroke-width="1.5"/><circle cx="1118.2" cy="591.7" r="4.6" fill="#a02b93" stroke="#ebebeb" stroke-width="1.5"/></svg>
<div class="t" style="left:287px;top:850.4px;width:200px;text-align:right;font-size:13.5px;height:13.5px;color:#2a3b52;">0</div>
<div class="t" style="left:287px;top:782.8px;width:200px;text-align:right;font-size:13.5px;height:13.5px;color:#2a3b52;">5,000</div>
<div class="t" style="left:287px;top:715.2px;width:200px;text-align:right;font-size:13.5px;height:13.5px;color:#2a3b52;">10,000</div>
<div class="t" style="left:287px;top:647.5px;width:200px;text-align:right;font-size:13.5px;height:13.5px;color:#2a3b52;">15,000</div>
<div class="t" style="left:287px;top:580.0px;width:200px;text-align:right;font-size:13.5px;height:13.5px;color:#2a3b52;">20,000</div>
<div class="t" style="left:287px;top:512.4px;width:200px;text-align:right;font-size:13.5px;height:13.5px;color:#2a3b52;">25,000</div>
<div class="t" style="left:287px;top:444.8px;width:200px;text-align:right;font-size:13.5px;height:13.5px;color:#2a3b52;">30,000</div>
<div class="t" style="left:287px;top:377.2px;width:200px;text-align:right;font-size:13.5px;height:13.5px;color:#2a3b52;">35,000</div>
<div class="t" style="left:287px;top:309.6px;width:200px;text-align:right;font-size:13.5px;height:13.5px;color:#2a3b52;">40,000</div>
<div class="t" style="left:287px;top:242.0px;width:200px;text-align:right;font-size:13.5px;height:13.5px;color:#2a3b52;">45,000</div>
<div class="t" style="left:287px;top:174.4px;width:200px;text-align:right;font-size:13.5px;height:13.5px;color:#2a3b52;">50,000</div>
<div class="t" id="k56" style="left:521.8px;top:872.5px;font-size:14px;height:14px;color:#2a3b52;transform:scaleX(1.0143);transform-origin:0 50%;">2017年度</div>
<div class="t" id="k57" style="left:616.2px;top:872.5px;font-size:14px;height:14px;color:#2a3b52;transform:scaleX(1.0143);transform-origin:0 50%;">2018年度</div>
<div class="t" id="k58" style="left:710.6px;top:872.5px;font-size:14px;height:14px;color:#2a3b52;transform:scaleX(1.0143);transform-origin:0 50%;">2019年度</div>
<div class="t" id="k59" style="left:805.0px;top:872.5px;font-size:14px;height:14px;color:#2a3b52;transform:scaleX(1.0143);transform-origin:0 50%;">2020年度</div>
<div class="t" id="k60" style="left:899.5px;top:872.5px;font-size:14px;height:14px;color:#2a3b52;transform:scaleX(1.0143);transform-origin:0 50%;">2021年度</div>
<div class="t" id="k61" style="left:993.9px;top:872.5px;font-size:14px;height:14px;color:#2a3b52;transform:scaleX(1.0143);transform-origin:0 50%;">2022年度</div>
<div class="t" id="k62" style="left:1088.2px;top:872.5px;font-size:14px;height:14px;color:#2a3b52;transform:scaleX(1.0143);transform-origin:0 50%;">2023年度</div>
<div class="a" style="left:449px;top:141px;width:130px;height:22px;background:linear-gradient(#ececec,#c9c9c9);"></div>
<div class="t" id="k63" style="left:453px;top:145.2px;font-size:13.5px;height:13.5px;color:#1a1a1a;transform:scaleX(1.0082);transform-origin:0 50%;">合計 / 受給者数 (人)</div>
<div class="a" style="left:1185px;top:441px;width:246px;height:21.7px;background:linear-gradient(#ececec,#c9c9c9);"></div>
<div class="t" id="k64" style="left:1189px;top:445.1px;font-size:13.5px;height:13.5px;color:#1a1a1a;transform:scaleX(0.9286);transform-origin:0 50%;">支給要件</div>
<svg style="left:1403px;top:444px;" width="26" height="17" viewBox="0 0 26 17"><path d="M1 9h8l-4 4z" fill="#333"/><path d="M7.3 1.8H22.3L16.6 8.6V15.5H13V8.6Z" fill="#767676" stroke="#767676" stroke-width="0.6" stroke-linejoin="round"/></svg>
<div class="a" style="left:1185px;top:464.2px;width:246px;height:21.5px;background:linear-gradient(#ececec,#c9c9c9);"></div>
<div class="t" id="k65" style="left:1189px;top:468.2px;font-size:13.5px;height:13.5px;color:#1a1a1a;transform:scaleX(0.9483);transform-origin:0 50%;">code_都道府県</div>
<svg style="left:1403px;top:467.2px;" width="26" height="17" viewBox="0 0 26 17"><path d="M1 9h8l-4 4z" fill="#333"/><path d="M7.3 1.8H22.3L16.6 8.6V15.5H13V8.6Z" fill="#767676" stroke="#767676" stroke-width="0.6" stroke-linejoin="round"/></svg>
<div class="a" style="left:449px;top:903px;width:54px;height:22px;background:linear-gradient(#ececec,#c9c9c9);"></div>
<div class="t" id="k66" style="left:453px;top:907.2px;font-size:13.5px;height:13.5px;color:#1a1a1a;transform:scaleX(0.9536);transform-origin:0 50%;">年度</div>
<svg style="left:487px;top:911.0px;" width="10" height="6" viewBox="0 0 10 6"><path d="M1 1h8l-4 4.5z" fill="#333"/></svg>
<div class="t" id="k67" style="left:1228px;top:493.6px;font-size:13.5px;height:13.5px;color:#2a3b52;transform:scaleX(1.0407);transform-origin:0 50%;">外国人受給者数 - 11_埼玉県</div>
<div class="t" id="k68" style="left:1228px;top:521.5px;font-size:13.5px;height:13.5px;color:#2a3b52;transform:scaleX(1.0348);transform-origin:0 50%;">外国人受給者数 - 12_千葉県</div>
<div class="t" id="k69" style="left:1228px;top:549.5px;font-size:13.5px;height:13.5px;color:#2a3b52;transform:scaleX(1.0348);transform-origin:0 50%;">外国人受給者数 - 13_東京都</div>
<div class="t" id="k70" style="left:1228px;top:577.8px;font-size:13.5px;height:13.5px;color:#2a3b52;transform:scaleX(1.0343);transform-origin:0 50%;">外国人受給者数 - 14_神奈川県</div>
<div class="t" id="k71" style="left:1228px;top:605.8px;font-size:13.5px;height:13.5px;color:#2a3b52;transform:scaleX(1.0348);transform-origin:0 50%;">外国人受給者数 - 27_大阪府</div>
<svg style="left:0px;top:0px;pointer-events:none" width="1920" height="996" viewBox="0 0 1920 996"><path d="M1192 500.9H1224" stroke="#156082" stroke-width="3.8" stroke-linecap="round"/><circle cx="1207" cy="500.5" r="3.6" fill="#156082" stroke="#ececec" stroke-width="1.3"/><path d="M1192 528.8H1224" stroke="#e97132" stroke-width="3.8" stroke-linecap="round"/><circle cx="1207" cy="528.4" r="3.6" fill="#e97132" stroke="#ececec" stroke-width="1.3"/><path d="M1192 556.8H1224" stroke="#196b24" stroke-width="3.8" stroke-linecap="round"/><circle cx="1207" cy="556.4" r="3.6" fill="#196b24" stroke="#ececec" stroke-width="1.3"/><path d="M1192 585.1H1224" stroke="#0f9ed5" stroke-width="3.8" stroke-linecap="round"/><circle cx="1207" cy="584.7" r="3.6" fill="#0f9ed5" stroke="#ececec" stroke-width="1.3"/><path d="M1192 613.1H1224" stroke="#a02b93" stroke-width="3.8" stroke-linecap="round"/><circle cx="1207" cy="612.7" r="3.6" fill="#a02b93" stroke="#ececec" stroke-width="1.3"/></svg>
<svg style="left:0px;top:0px;pointer-events:none" width="1920" height="996" viewBox="0 0 1920 996"><circle cx="436.7" cy="131.5" r="5.9" fill="#fff" stroke="#5c5c5c" stroke-width="2.4"/><circle cx="940.7" cy="131.5" r="5.9" fill="#fff" stroke="#5c5c5c" stroke-width="2.4"/><circle cx="1444.7" cy="131.5" r="5.9" fill="#fff" stroke="#5c5c5c" stroke-width="2.4"/><circle cx="436.7" cy="534.8" r="5.9" fill="#fff" stroke="#5c5c5c" stroke-width="2.4"/><circle cx="1444.7" cy="534.8" r="5.9" fill="#fff" stroke="#5c5c5c" stroke-width="2.4"/><circle cx="436.7" cy="937.7" r="5.9" fill="#fff" stroke="#5c5c5c" stroke-width="2.4"/><circle cx="940.7" cy="937.7" r="5.9" fill="#fff" stroke="#5c5c5c" stroke-width="2.4"/><circle cx="1444.7" cy="937.7" r="5.9" fill="#fff" stroke="#5c5c5c" stroke-width="2.4"/></svg>
<div class="a" style="left:0px;top:953px;width:1482px;height:40px;background:#fff"></div>
<div class="a" style="left:0px;top:953px;width:213px;height:40px;background:#e4e8ef;border-top-right-radius:6px"></div>
<div class="a" style="left:279px;top:953px;width:1203px;height:40px;background:#e4e8ef;border-top-left-radius:6px"></div>
<div class="a" style="left:213px;top:985px;width:66px;height:8px;background:#e4e8ef"></div>
<svg style="left:30px;top:964px;" width="12" height="18" viewBox="0 0 12 18"><path d="M9 2L3 9l6 7" fill="none" stroke="#8c8c8c" stroke-width="1.4"/></svg>
<svg style="left:70px;top:964px;" width="12" height="18" viewBox="0 0 12 18"><path d="M3 2l6 7-6 7" fill="none" stroke="#8c8c8c" stroke-width="1.4"/></svg>
<div class="t" id="k72" style="left:152px;top:963.5px;font-size:19px;height:19px;color:#262626;transform:scaleX(1.0004);transform-origin:0 50%;">data</div>
<div class="a" style="left:207px;top:962px;width:1px;height:23px;background:#c4c4c4"></div>
<div class="a" style="left:213px;top:953px;width:66px;height:35px;background:#fff;border-radius:0 0 7px 7px;box-shadow:0 0.5px 1px rgba(0,0,0,0.12)"></div>
<div class="t" id="k73" style="left:226px;top:960.2px;font-size:19.5px;height:19.5px;color:#262626;transform:scaleX(0.9951);transform-origin:0 50%;">pivot</div>
<div class="a" style="left:223px;top:983px;width:46px;height:2px;background:#107c41"></div>
<div class="a" style="left:284px;top:962px;width:1px;height:23px;background:#c4c4c4"></div>
<svg style="left:336px;top:964px;" width="16" height="16" viewBox="0 0 16 16"><path d="M8 1v14M1 8h14" stroke="#333" stroke-width="1.5"/></svg>
<svg style="left:890px;top:963px;" width="6" height="20" viewBox="0 0 6 20"><circle cx="3" cy="3" r="1.5" fill="#333"/><circle cx="3" cy="9" r="1.5" fill="#333"/><circle cx="3" cy="15" r="1.5" fill="#333"/></svg>
<div class="a" style="left:914px;top:962px;width:545px;height:21px;background:#f3f3f3;border-radius:10px"></div>
<svg style="left:917px;top:965px;" width="14" height="14" viewBox="0 0 14 14"><path d="M12 1.5v11L3.5 7z" fill="#555"/></svg>
<div class="a" style="left:935px;top:966.5px;width:155px;height:11.5px;background:#707070;border-radius:6px"></div>
<svg style="left:1441px;top:965px;" width="14" height="14" viewBox="0 0 14 14"><path d="M2 1.5v11L10.5 7z" fill="#555"/></svg>
<div class="a" style="left:0px;top:993px;width:1920px;height:3px;background:#eeeeee;border-top:1px solid #cfcfcf"></div>
<div class="a" style="left:1456px;top:98px;width:26px;height:855px;background:#e5e9ef"></div>
<div class="a" style="left:1459px;top:101px;width:21px;height:854px;background:#f4f4f4;border-radius:10px"></div>
<svg style="left:1463px;top:103px;" width="12" height="10" viewBox="0 0 12 10"><path d="M0.5 8.5L6 2l5.5 6.5z" fill="#777"/></svg>
<div class="a" style="left:1464px;top:119px;width:11px;height:170px;background:#747474;border-radius:6px"></div>
<svg style="left:1463px;top:940px;" width="12" height="11" viewBox="0 0 12 11"><path d="M0.5 1L6 9.5l5.5-8.5z" fill="#707070" stroke="#707070" stroke-width="1" stroke-linejoin="round"/></svg>
<div class="a" style="left:1482px;top:98px;width:438px;height:895px;background:#f8f8f8;border-left:1px solid #c9c9c9"></div>
<div class="t" id="k74" style="left:1497px;top:116.2px;font-size:17.5px;height:17.5px;color:#1f1f1f;font-weight:bold;transform:scaleX(0.7906);transform-origin:0 50%;">ピボットグラフのフィールド</div>
<svg style="left:1842.5px;top:120px;" width="18" height="11" viewBox="0 0 18 11"><path d="M1 1l8 8 8-8" fill="none" stroke="#333" stroke-width="1.4"/></svg>
<svg style="left:1884.5px;top:118px;" width="15" height="15" viewBox="0 0 15 15"><path d="M1 1l13 13M14 1L1 14" stroke="#333" stroke-width="1.4"/></svg>
<div class="t" id="k75" style="left:1499px;top:153.8px;font-size:14.5px;height:14.5px;color:#1f1f1f;font-weight:bold;transform:scaleX(0.7733);transform-origin:0 50%;">アクティブ</div>
<div class="t" id="k76" style="left:1589px;top:153.8px;font-size:14.5px;height:14.5px;color:#333;transform:scaleX(0.7933);transform-origin:0 50%;">すべて</div>
<div class="a" style="left:1498px;top:179px;width:62px;height:3px;background:#0f6b3a"></div>
<div class="t" id="k77" style="left:1499px;top:197.8px;font-size:14.5px;height:14.5px;color:#262626;transform:scaleX(0.7908);transform-origin:0 50%;">レポートに追加するフィールドを選択してください:</div>
<div class="a" style="left:1848px;top:187.5px;width:57px;height:34px;background:#fff;border:1px solid #a9a9a9"></div>
<svg style="left:1860px;top:194px;" width="20" height="20" viewBox="0 0 20 20"><g transform="translate(10 10)" fill="none" stroke="#444" stroke-width="1.3" stroke-linejoin="round"><circle r="3"/><path d="M-3.45 -5.98 L-1.98 -6.92 L-1.77 -9.13 L1.77 -9.13 L1.98 -6.92 L3.45 -5.98 L3.45 -5.98 L5.00 -5.18 L7.02 -6.10 L8.79 -3.03 L6.99 -1.74 L6.90 0.00 L6.90 0.00 L6.99 1.74 L8.79 3.03 L7.02 6.10 L5.00 5.18 L3.45 5.98 L3.45 5.98 L1.98 6.92 L1.77 9.13 L-1.77 9.13 L-1.98 6.92 L-3.45 5.98 L-3.45 5.98 L-5.00 5.18 L-7.02 6.10 L-8.79 3.03 L-6.99 1.74 L-6.90 0.00 L-6.90 -0.00 L-6.99 -1.74 L-8.79 -3.03 L-7.02 -6.10 L-5.00 -5.18 L-3.45 -5.98Z"/></g></svg>
<svg style="left:1889px;top:201px;" width="9" height="6" viewBox="0 0 9 6"><path d="M1 1l3.5 3.5L8 1" fill="none" stroke="#444" stroke-width="1.3"/></svg>
<div class="a" style="left:1498px;top:239.5px;width:407px;height:29px;background:#fff;border:1px solid #a9a9a9"></div>
<div class="t" id="k78" style="left:1506px;top:246.8px;font-size:14.5px;height:14.5px;color:#8a8a8a;transform:scaleX(0.9833);transform-origin:0 50%;">検索</div>
<svg style="left:1878px;top:243px;" width="22" height="22" viewBox="0 0 22 22"><circle cx="13.5" cy="8.5" r="6" fill="none" stroke="#333" stroke-width="1.3"/><path d="M9.3 12.7L2.5 19.5" stroke="#333" stroke-width="1.4"/></svg>
<div class="a" style="left:1498px;top:291px;width:407px;height:252px;background:#fff;border:1px solid #a9a9a9;overflow:hidden"></div>
<div class="a" style="left:1499px;top:292px;width:384px;height:250px;overflow:hidden"><div class="a" style="left:47px;top:-6.5px;width:16px;height:16px;background:#fff;border:1px solid #666;border-radius:1px"></div><div class="t" id="k79" style="left:70px;top:-3.0px;font-size:15px;color:#1f1f1f;transform:scaleX(0.9833);transform-origin:0 50%;">日付</div><div class="a" style="left:47px;top:24px;width:16px;height:16px;background:#107c41;border-radius:1px"></div><svg style="left:47px;top:24px" width="16" height="16"><path d="M4 8.2l2.8 2.8 5.5-5.5" fill="none" stroke="#fff" stroke-width="1.3"/></svg><div class="t" id="k80" style="left:70px;top:27.5px;font-size:15px;color:#1f1f1f;font-weight:bold;transform:scaleX(0.9833);transform-origin:0 50%;">年度</div><div class="a" style="left:47px;top:54.69999999999999px;width:16px;height:16px;background:#fff;border:1px solid #666;border-radius:1px"></div><div class="t" id="k81" style="left:70px;top:58.19999999999999px;font-size:15px;color:#1f1f1f;transform:scaleX(0.9667);transform-origin:0 50%;">値</div><div class="a" style="left:47px;top:85.39999999999998px;width:16px;height:16px;background:#107c41;border-radius:1px"></div><svg style="left:47px;top:85.39999999999998px" width="16" height="16"><path d="M4 8.2l2.8 2.8 5.5-5.5" fill="none" stroke="#fff" stroke-width="1.3"/></svg><div class="t" id="k82" style="left:70px;top:88.89999999999998px;font-size:15px;color:#1f1f1f;font-weight:bold;transform:scaleX(1.0314);transform-origin:0 50%;">code_都道府県</div><svg style="left:363px;top:85.39999999999998px" width="18" height="18"><path d="M1.5 2h15l-5.5 6.5v8l-4-2.5v-5.5z" fill="none" stroke="#444" stroke-width="1.2"/></svg><div class="a" style="left:47px;top:116.10000000000002px;width:16px;height:16px;background:#fff;border:1px solid #666;border-radius:1px"></div><div class="t" id="k83" style="left:70px;top:119.60000000000002px;font-size:15px;color:#1f1f1f;transform:scaleX(1.0002);transform-origin:0 50%;">区分_階層1</div><div class="a" style="left:47px;top:146.8px;width:16px;height:16px;background:#fff;border:1px solid #666;border-radius:1px"></div><div class="t" id="k84" style="left:70px;top:150.3px;font-size:15px;color:#1f1f1f;transform:scaleX(1.0002);transform-origin:0 50%;">区分_階層2</div><div class="a" style="left:47px;top:177.5px;width:16px;height:16px;background:#107c41;border-radius:1px"></div><svg style="left:47px;top:177.5px" width="16" height="16"><path d="M4 8.2l2.8 2.8 5.5-5.5" fill="none" stroke="#fff" stroke-width="1.3"/></svg><div class="t" id="k85" style="left:70px;top:181.0px;font-size:15px;color:#1f1f1f;font-weight:bold;transform:scaleX(0.9900);transform-origin:0 50%;">支給要件</div><svg style="left:363px;top:177.5px" width="18" height="18"><path d="M1.5 2h15l-5.5 6.5v8l-4-2.5v-5.5z" fill="none" stroke="#444" stroke-width="1.2"/></svg><div class="a" style="left:47px;top:208.60000000000002px;width:16px;height:16px;background:#107c41;border-radius:1px"></div><svg style="left:47px;top:208.60000000000002px" width="16" height="16"><path d="M4 8.2l2.8 2.8 5.5-5.5" fill="none" stroke="#fff" stroke-width="1.3"/></svg><div class="t" id="k86" style="left:70px;top:212.10000000000002px;font-size:15px;color:#1f1f1f;font-weight:bold;transform:scaleX(1.0429);transform-origin:0 50%;">受給者数 (人)</div></div>
<div class="a" style="left:1883px;top:292px;width:21px;height:250px;background:#efefef"></div>
<svg style="left:1887px;top:296px;" width="13" height="10" viewBox="0 0 13 10"><path d="M1 8.5L6.5 2 12 8.5z" fill="#666"/></svg>
<div class="a" style="left:1888px;top:336px;width:11px;height:185px;background:#6d6d6d"></div>
<svg style="left:1887px;top:526px;" width="13" height="10" viewBox="0 0 13 10"><path d="M1 1.5L6.5 8 12 1.5z" fill="#666"/></svg>
<div class="a" style="left:1500px;top:561.5px;width:406px;height:1px;border-top:1px dotted #c4c4c4"></div>
<div class="t" id="k87" style="left:1503px;top:569.8px;font-size:14.5px;height:14.5px;color:#262626;transform:scaleX(0.7464);transform-origin:0 50%;">次のボックス間でフィールドをドラッグしてください:</div>
<div class="a" style="left:1703px;top:608px;width:1px;height:317px;background:#cfcfcf"></div>
<div class="a" style="left:1502px;top:766px;width:404px;height:1.2px;background:#c8c8c8"></div>
<div class="a" style="left:1502px;top:634px;width:194px;height:125px;background:#fff"></div>
<div class="a" style="left:1705px;top:634px;width:201px;height:125px;background:#fff"></div>
<div class="a" style="left:1502px;top:800px;width:194px;height:125px;background:#fff"></div>
<div class="a" style="left:1705px;top:800px;width:201px;height:125px;background:#fff"></div>
<svg style="left:1506px;top:611px;" width="16" height="16" viewBox="0 0 16 16"><path d="M1.5 2h12l-4.5 5.5v7l-3-2v-5z" fill="#555"/></svg>
<div class="t" id="k88" style="left:1530px;top:612.2px;font-size:14.5px;height:14.5px;color:#262626;transform:scaleX(0.6853);transform-origin:0 50%;">フィルター</div>
<svg style="left:1712px;top:611px;" width="14" height="14" viewBox="0 0 14 14"><path d="M2 2v10M5 2v10M8 2v10M11 2v10" stroke="#888" stroke-width="1.3"/></svg>
<div class="t" id="k89" style="left:1734px;top:612.2px;font-size:14.5px;height:14.5px;color:#262626;transform:scaleX(1.0680);transform-origin:0 50%;">凡例 (系列)</div>
<svg style="left:1506px;top:778px;" width="14" height="14" viewBox="0 0 14 14"><path d="M1 3h12M1 6h12M1 9h12" stroke="#888" stroke-width="1.4"/></svg>
<div class="t" id="k90" style="left:1530px;top:778.2px;font-size:14.5px;height:14.5px;color:#262626;transform:scaleX(1.0576);transform-origin:0 50%;">軸 (分類項目)</div>
<svg style="left:1710px;top:776px;" width="16" height="15" viewBox="0 0 16 15"><path d="M14 2.6H2.6L8.6 7.6L2.6 12.5H14.2" fill="none" stroke="#858585" stroke-width="1.5"/></svg>
<div class="t" id="k91" style="left:1734px;top:778.2px;font-size:14.5px;height:14.5px;color:#262626;transform:scaleX(1.0333);transform-origin:0 50%;">値</div>
<div class="a" style="left:1707px;top:636px;width:198px;height:27px;background:#fff;border:1px solid #a9a9a9"></div>
<div class="t" id="k92" style="left:1717.4px;top:642.8px;font-size:14.5px;height:14.5px;color:#1f1f1f;transform:scaleX(0.9917);transform-origin:0 50%;">支給要件</div>
<svg style="left:1886px;top:647px;" width="9" height="6" viewBox="0 0 9 6"><path d="M1 1l3.5 3.5L8 1" fill="none" stroke="#444" stroke-width="1.3"/></svg>
<div class="a" style="left:1707px;top:665.5px;width:198px;height:27px;background:#fff;border:1px solid #a9a9a9"></div>
<div class="t" id="k93" style="left:1717.4px;top:672.2px;font-size:14.5px;height:14.5px;color:#1f1f1f;transform:scaleX(1.0370);transform-origin:0 50%;">code_都道府県</div>
<svg style="left:1886px;top:676.5px;" width="9" height="6" viewBox="0 0 9 6"><path d="M1 1l3.5 3.5L8 1" fill="none" stroke="#444" stroke-width="1.3"/></svg>
<div class="a" style="left:1503px;top:802px;width:192px;height:27px;background:#fff;border:1px solid #a9a9a9"></div>
<div class="t" id="k94" style="left:1513.4px;top:808.8px;font-size:14.5px;height:14.5px;color:#1f1f1f;transform:scaleX(0.9667);transform-origin:0 50%;">年度</div>
<svg style="left:1676px;top:813px;" width="9" height="6" viewBox="0 0 9 6"><path d="M1 1l3.5 3.5L8 1" fill="none" stroke="#444" stroke-width="1.3"/></svg>
<div class="a" style="left:1707px;top:802px;width:198px;height:27px;background:#fff;border:1px solid #a9a9a9"></div>
<div class="t" id="k95" style="left:1717.4px;top:808.8px;font-size:14.5px;height:14.5px;color:#1f1f1f;transform:scaleX(1.0697);transform-origin:0 50%;">合計 / 受給者数 (人)</div>
<svg style="left:1886px;top:813px;" width="9" height="6" viewBox="0 0 9 6"><path d="M1 1l3.5 3.5L8 1" fill="none" stroke="#444" stroke-width="1.3"/></svg>
<div class="a" style="left:1506px;top:958px;width:16px;height:16px;background:#fff;border:1px solid #555;border-radius:2px"></div>
<div class="t" id="k96" style="left:1530px;top:959.0px;font-size:14px;height:14px;color:#262626;transform:scaleX(0.8918);transform-origin:0 50%;">レイアウトの更新を保留する</div>
<div class="a" style="left:1862px;top:950px;width:44px;height:31px;background:#f0f0f0;border:1px solid #dcdcdc"></div>
<div class="t" id="k97" style="left:1868.7px;top:958.5px;font-size:14px;height:14px;color:#a0a0a0;transform:scaleX(1.0714);transform-origin:0 50%;">更新</div>
<div class="a" style="left:0px;top:98px;width:1920px;height:4px;background:linear-gradient(rgba(0,0,0,0.07),rgba(0,0,0,0))"></div>
<script>(function(){var M={"k0": 58, "k1": 312, "k2": 58, "k3": 33, "k4": 46, "k5": 41, "k6": 33, "k7": 33, "k8": 112, "k9": 33, "k10": 41, "k11": 33, "k12": 33, "k13": 50, "k14": 42, "k15": 64, "k16": 97, "k17": 120, "k18": 53, "k19": 34, "k20": 49.5, "k21": 32, "k22": 24.5, "k23": 59, "k24": 59, "k25": 59, "k26": 59, "k27": 59, "k28": 59, "k29": 59, "k30": 66, "k31": 38, "k32": 51, "k33": 66, "k34": 50, "k35": 50.5, "k36": 51, "k37": 90, "k38": 103, "k39": 154.6, "k40": 190.6, "k41": 168.7, "k42": 189.8, "k43": 88.6, "k44": 63, "k45": 63, "k46": 63, "k47": 63, "k48": 63, "k49": 63, "k50": 78, "k51": 63, "k52": 63, "k53": 63, "k54": 63, "k55": 63, "k56": 60, "k57": 60, "k58": 60, "k59": 60, "k60": 60, "k61": 60, "k62": 60, "k63": 123, "k64": 52, "k65": 88, "k66": 26.7, "k67": 180.6, "k68": 180.6, "k69": 180.6, "k70": 195, "k71": 180.6, "k72": 37, "k73": 41, "k74": 185, "k75": 58, "k76": 35.7, "k77": 276, "k78": 29.5, "k79": 29.5, "k80": 29.5, "k81": 14.5, "k82": 106.6, "k83": 76.7, "k84": 76.7, "k85": 59.4, "k86": 93, "k87": 271.7, "k88": 51.4, "k89": 78.7, "k90": 93.8, "k91": 15.5, "k92": 59.5, "k93": 103.2, "k94": 29, "k95": 139.9, "k96": 162.3, "k97": 30};try{for(var id in M){var e=document.getElementById(id);if(!e)continue;var t=e.style.transform;e.style.transform="none";var r=document.createRange();r.selectNodeContents(e);var w=r.getBoundingClientRect().width;if(w>0.5){e.style.transform="scaleX("+(M[id]/w).toFixed(4)+")";}else{e.style.transform=t;}}}catch(x){}})();</script></body></html>
